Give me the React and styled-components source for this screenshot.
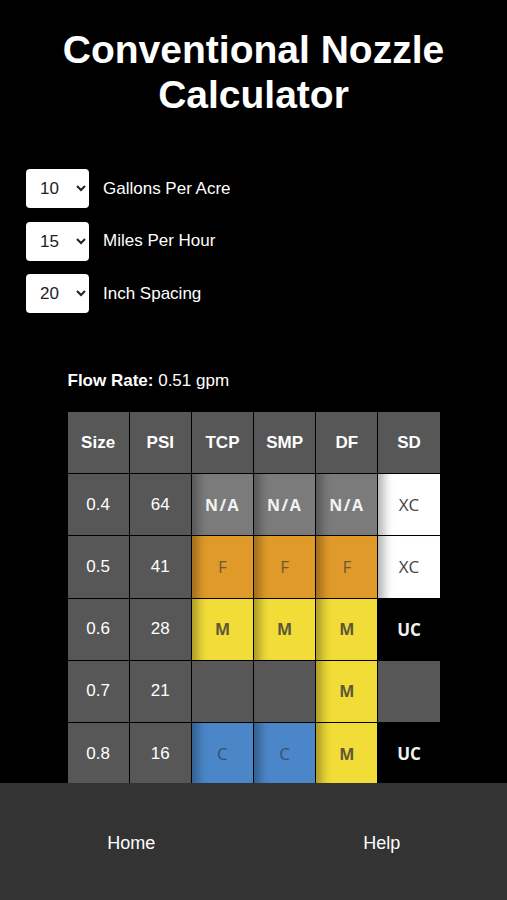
import styled, { createGlobalStyle } from 'styled-components';

const GlobalStyle = createGlobalStyle`
  html, body {
    margin: 0;
    padding: 0;
    background: #000;
    color: #fff;
    font-family: "Liberation Sans", Arial, sans-serif;
  }
`

const Page = styled.div`
  min-height: 100vh;
  padding-bottom: 140px;
`

const Title = styled.h1`
  margin: 0;
  padding-top: 27px;
  font-size: 39px;
  line-height: 45px;
  font-weight: bold;
  text-align: center;
`

const Inputs = styled.div`
  display: flex;
  flex-direction: column;
  gap: 13.5px;
  padding: 52px 0 0 26px;
`

const InputRow = styled.label`
  display: flex;
  align-items: center;
  gap: 14px;
  font-size: 17px;
`

const Select = styled.select`
  width: 63px;
  height: 39px;
  padding: 0 6px 0 10px;
  border: none;
  border-radius: 4px;
  background: #fff;
  color: #222;
  font-family: "Liberation Sans", Arial, sans-serif;
  font-size: 17px;
`

const FlowRate = styled.p`
  width: 372px;
  margin: 58px auto 0;
  font-size: 17px;

  b {
    font-weight: bold;
  }
`

const Grid = styled.div`
  display: grid;
  grid-template-columns: repeat(6, 61.2px);
  grid-auto-rows: 61.2px;
  gap: 1px;
  width: 372px;
  margin: 21px auto 0;
`

const tones = {
  head: { bg: '#575757', fg: '#fff', weight: 'bold', shade: false },
  plain: { bg: '#575757', fg: '#fff', weight: 'normal', shade: false },
  na: { bg: '#7b7b7b', fg: '#f2f2f2', weight: 'bold', shade: true },
  F: { bg: '#e09a29', fg: '#6b5a3a', weight: 'normal', shade: true },
  M: { bg: '#f1dc38', fg: '#5d5838', weight: 'bold', shade: true },
  C: { bg: '#4a86c8', fg: '#35506f', weight: 'normal', shade: true },
  XC: { bg: '#fff', fg: '#444', weight: 'normal', shade: true },
  UC: { bg: '#000', fg: '#f2f2f2', weight: 'bold', shade: false },
}

const Cell = styled.div`
  display: flex;
  align-items: center;
  justify-content: center;
  background: ${p => tones[p.$tone].bg};
  color: ${p => tones[p.$tone].fg};
  font-weight: ${p => tones[p.$tone].weight};
  font-size: ${p => (p.$tone === 'na' || p.$tone === 'M' ? '16px' : '17px')};
  letter-spacing: ${p => (p.$tone === 'na' ? '1.5px' : '0')};
  font-family: ${p => (p.$tone === 'head' || p.$tone === 'plain'
    ? '"Liberation Sans", Arial, sans-serif'
    : '"Open Sans", "Liberation Sans", sans-serif')};
  box-shadow: ${p => (tones[p.$tone].shade
    ? 'inset 14px 0 10px -8px rgba(0, 0, 0, 0.3)'
    : 'none')};
`

const Footer = styled.nav`
  position: fixed;
  left: 0;
  right: 0;
  bottom: 0;
  height: 117px;
  display: flex;
  align-items: center;
  padding-left: 6px;
  background: #333;
`

const NavLink = styled.a`
  flex: 1;
  text-align: center;
  color: #fff;
  font-size: 18px;
  text-decoration: none;
  padding-top: 3px;
`

const rows = [
  ['0.4', '64', 'na', 'na', 'na', 'XC'],
  ['0.5', '41', 'F', 'F', 'F', 'XC'],
  ['0.6', '28', 'M', 'M', 'M', 'UC'],
  ['0.7', '21', 'blank', 'blank', 'M', 'blank'],
  ['0.8', '16', 'C', 'C', 'M', 'UC'],
]

const label = t => (t === 'na' ? 'N/A' : t === 'blank' ? '' : t)

export default function App() {
  return (
    <>
      <GlobalStyle />
      <Page>
        <Title>Conventional Nozzle<br />Calculator</Title>
        <Inputs>
          <InputRow>
            <Select defaultValue="10">
              {[5, 10, 15, 20].map(v => <option key={v}>{v}</option>)}
            </Select>
            Gallons Per Acre
          </InputRow>
          <InputRow>
            <Select defaultValue="15">
              {[5, 10, 15, 20].map(v => <option key={v}>{v}</option>)}
            </Select>
            Miles Per Hour
          </InputRow>
          <InputRow>
            <Select defaultValue="20">
              {[15, 20, 30].map(v => <option key={v}>{v}</option>)}
            </Select>
            Inch Spacing
          </InputRow>
        </Inputs>

        <FlowRate><b>Flow Rate:</b> 0.51 gpm</FlowRate>

        <Grid>
          {['Size', 'PSI', 'TCP', 'SMP', 'DF', 'SD'].map(h => (
            <Cell key={h} $tone="head">{h}</Cell>
          ))}
          {rows.map(r => [
            <Cell key={r[0] + 's'} $tone="plain">{r[0]}</Cell>,
            <Cell key={r[0] + 'p'} $tone="plain">{r[1]}</Cell>,
            ...r.slice(2).map((t, i) => (
              <Cell key={r[0] + i} $tone={t === 'blank' ? 'plain' : t}>{label(t)}</Cell>
            )),
          ])}
        </Grid>
      </Page>
      <Footer>
        <NavLink href="#">Home</NavLink>
        <NavLink href="#">Help</NavLink>
      </Footer>
    </>
  );
}
